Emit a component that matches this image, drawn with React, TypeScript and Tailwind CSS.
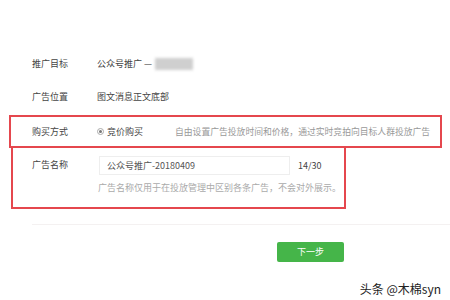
export default function App() {
  const font = { fontFamily: '"Noto Sans CJK SC", "Liberation Sans", sans-serif' };
  return (
    <main className="w-[450px] h-[300px] bg-white overflow-hidden text-[9px] text-[#444]" style={font}>
      <div className="pt-[56px]">
        {/* 推广目标 */}
        <div className="flex items-center h-[16px] pl-[32px]">
          <span className="w-[65px]">推广目标</span>
          <span>公众号推广 —</span>
          <span className="ml-[3px] w-[38px] h-[12px] bg-[#cfcfcf] blur-[1.5px]"></span>
        </div>

        {/* 广告位置 */}
        <div className="flex items-center h-[16px] pl-[32px] mt-[17px]">
          <span className="w-[65px]">广告位置</span>
          <span>图文消息正文底部</span>
        </div>

        {/* 购买方式 */}
        <div className="ml-[9px] mt-[10px] w-[433px] h-[33px] border-2 border-[#e5474e] flex items-center pl-[21px]">
          <span className="w-[65px]">购买方式</span>
          <span className="flex items-center gap-[3px] w-[78px]">
            <span className="w-[7px] h-[7px] rounded-full border border-[#aaa] flex items-center justify-center">
              <span className="w-[3px] h-[3px] rounded-full bg-[#777]"></span>
            </span>
            竞价购买
          </span>
          <span className="text-[#999] text-[8.8px]">自由设置广告投放时间和价格，通过实时竞拍向目标人群投放广告</span>
        </div>

        {/* 广告名称 */}
        <div className="ml-[11px] w-[335px] h-[61px] border-2 border-t-0 border-[#e5474e] pl-[19px] pt-[8px]">
          <div className="flex items-start">
            <span className="w-[67px] pt-[2px]">广告名称</span>
            <div className="w-[191px] h-[19px] border border-[#eee] flex items-center pl-[7px] text-[#555]">
              公众号推广-20180409
            </div>
            <span className="ml-[8px] pt-[3px]">14/30</span>
          </div>
          <div className="ml-[66px] mt-[6px] text-[#aaa]">广告名称仅用于在投放管理中区别各条广告，不会对外展示。</div>
        </div>

        <div className="ml-[32px] mt-[15px] h-px bg-[#f4f1f1]"></div>

        <div className="ml-[277px] mt-[17px] w-[67px] h-[20px] rounded-[2px] bg-[#45b549] text-white flex items-center justify-center">
          下一步
        </div>

        <div className="flex justify-end pr-[9px] mt-[18px] text-[12px] text-[#222]">头条 @木棉syn</div>
      </div>
    </main>
  );
}
